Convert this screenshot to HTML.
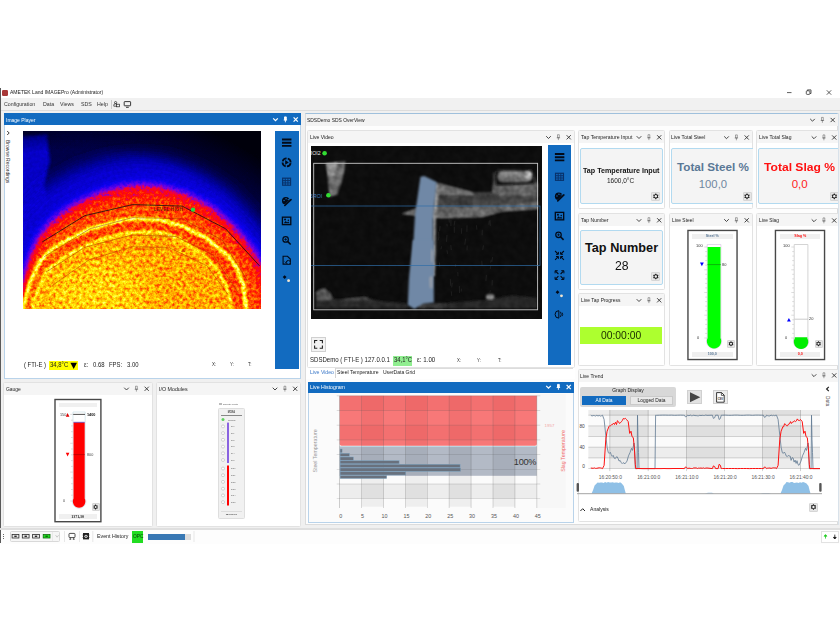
<!DOCTYPE html>
<html><head><meta charset="utf-8"><title>AMETEK Land IMAGEPro</title>
<style>
*{box-sizing:border-box;margin:0;padding:0}
html,body{width:840px;height:630px;overflow:hidden;background:#fff}
body{position:relative;font-family:"Liberation Sans",sans-serif;font-size:6px;color:#111;line-height:1}
.a{position:absolute}
.t{position:absolute;white-space:nowrap;line-height:1;transform:scaleX(.94);transform-origin:0 50%}
.tc{transform-origin:50% 50%}
.pt{position:absolute;background:#f4f4f4}
.blue{background:#126bc0}
svg{position:absolute;overflow:visible}
</style></head><body>

<div class="a" style="left:0px;top:87px;width:840px;height:457px;background:#f0f0f0"></div>
<div class="a" style="left:0px;top:87px;width:840px;height:11px;background:#fff"></div>
<div class="a" style="left:0px;top:88px;width:1.2px;height:455px;background:#5a5a5a"></div>
<div class="a" style="left:2px;top:90px;width:5.8px;height:5.8px;background:#a83838;border-radius:1.2px"></div>
<div class="t" style="left:10.4px;top:90px;font-size:5.6px;color:#222;transform:scaleX(.9)">AMETEK Land IMAGEPro (Administrator)</div>
<div class="a" style="left:0px;top:98px;width:840px;height:12.5px;background:#f1f1f1;border-bottom:1px solid #dcdcdc"></div>
<div class="t" style="left:3.9px;top:102px;font-size:5.6px;color:#333">Configuration</div>
<div class="t" style="left:42.6px;top:102px;font-size:5.6px;color:#333">Data</div>
<div class="t" style="left:60.2px;top:102px;font-size:5.6px;color:#333">Views</div>
<div class="t" style="left:80.7px;top:102px;font-size:5.6px;color:#333">SDS</div>
<div class="t" style="left:96.7px;top:102px;font-size:5.6px;color:#333">Help</div>
<div class="a" style="left:111.3px;top:99.5px;width:0.7px;height:9.5px;background:#ccc"></div>
<svg class="a" style="left:0;top:0" width="840" height="630"><g fill="none" stroke="#222" stroke-width="0.7"><circle cx="115.6" cy="102.6" r="1.1"/><path d="M113.8 106.2v-1a1.8 1.6 0 0 1 3.6 0v1z"/><rect x="116.4" y="104.2" width="3" height="2.6" fill="#f1f1f1"/><rect x="124.2" y="101.6" width="6.4" height="4.2" rx="0.5" stroke-width="0.9"/><path d="M126 107.3h2.8" stroke-width="0.9"/></g></svg>
<svg class="a" style="left:780px;top:86px" width="60" height="12" viewBox="0 0 60 12"><g stroke="#333" stroke-width="0.8" fill="none"><path d="M7 6.6h4.5"/><rect x="26.3" y="4.8" width="3.6" height="3.6" rx="0.8"/><path d="M27.4 4.8v-0.9h3.6v3.6h-1"/><path d="M46.8 4.3l4.4 4.4M51.2 4.3l-4.4 4.4"/></g></svg>
<div class="a" style="left:3.5px;top:113px;width:297.5px;height:265.5px;background:#fff;border:1px solid #b9d3ea"></div>
<div class="a" style="left:3.5px;top:113px;width:297.5px;height:12px;background:#126bc0"></div>
<div class="t" style="left:6.1px;top:117.5px;font-size:5.7px;transform:scaleX(0.876);color:#fff">Image Player</div>
<svg class="a" style="left:0;top:0" width="840" height="630"><g stroke="#fff" stroke-width="1.25" fill="none"><path d="M273.2 118.4l2.3 2.3l2.3 -2.3"/><path d="M293.59999999999997 117.4l4.2 4.2M297.8 117.4l-4.2 4.2"/><path d="M284.5 116.9h1.8v3h-1.8zM283.7 120.0h3.4M285.4 120.0v2.3" stroke-width="0.9" opacity="1" fill="#fff"/></g></svg>
<svg class="a" style="left:5px;top:129px" width="8" height="8"><path d="M2.2 2l2 2l-2 2" stroke="#222" stroke-width="0.9" fill="none"/></svg>
<div class="t" style="left:4.5px;top:140px;font-size:5px;color:#333;writing-mode:vertical-rl;transform:none">Browse Recordings</div>
<svg class="a" style="left:23px;top:131px;overflow:hidden" width="237.5" height="178" viewBox="0 0 237.5 178"><defs>
<filter id="b12" x="-30%" y="-30%" width="160%" height="160%"><feGaussianBlur stdDeviation="13"/></filter>
<filter id="b9" x="-30%" y="-30%" width="160%" height="160%"><feGaussianBlur stdDeviation="8"/></filter>
<filter id="b5" x="-30%" y="-30%" width="160%" height="160%"><feGaussianBlur stdDeviation="5"/></filter>
<filter id="b2" x="-30%" y="-30%" width="160%" height="160%"><feGaussianBlur stdDeviation="1.6"/></filter>
<filter id="b1" x="-30%" y="-30%" width="160%" height="160%"><feGaussianBlur stdDeviation="0.8"/></filter>
<filter id="iron" x="0" y="0" width="100%" height="100%" color-interpolation-filters="sRGB">
 <feTurbulence type="fractalNoise" baseFrequency="0.3" numOctaves="3" seed="7" result="n"/>
 <feColorMatrix in="n" type="matrix" values="1.6 0 0 0 -0.3  1.6 0 0 0 -0.3  1.6 0 0 0 -0.3  0 0 0 0 1" result="ng"/>
 <feComposite in="SourceGraphic" in2="ng" operator="arithmetic" k1="0.46" k2="0.77" k3="0" k4="0" result="f"/>
 <feComponentTransfer in="f">
  <feFuncR type="table" tableValues="0 0 0 0.05 0.45 0.95 1 1 1 1 1 1 1"/>
  <feFuncG type="table" tableValues="0 0 0 0 0 0 0.05 0.3 0.55 0.78 0.95 1 1"/>
  <feFuncB type="table" tableValues="0.02 0.3 0.62 0.95 0.9 0.25 0 0 0 0 0.05 0.3 0.6"/>
  <feFuncA type="linear" slope="0" intercept="1"/>
 </feComponentTransfer>
</filter>
<filter id="ironlo" x="0" y="0" width="100%" height="100%" color-interpolation-filters="sRGB">
 <feTurbulence type="fractalNoise" baseFrequency="0.3" numOctaves="2" seed="2" result="n"/>
 <feColorMatrix in="n" type="matrix" values="1.6 0 0 0 -0.3  1.6 0 0 0 -0.3  1.6 0 0 0 -0.3  0 0 0 0 1" result="ng"/>
 <feComposite in="SourceGraphic" in2="ng" operator="arithmetic" k1="0.12" k2="0.94" k3="0" k4="0" result="f"/>
 <feComponentTransfer in="f">
  <feFuncR type="table" tableValues="0 0 0 0.05 0.45 0.95 1 1 1 1 1 1 1"/>
  <feFuncG type="table" tableValues="0 0 0 0 0 0 0.05 0.3 0.55 0.78 0.95 1 1"/>
  <feFuncB type="table" tableValues="0.02 0.3 0.62 0.95 0.9 0.25 0 0 0 0 0.05 0.3 0.6"/>
  <feFuncA type="linear" slope="0" intercept="1"/>
 </feComponentTransfer>
</filter>
<linearGradient id="tbg" x1="0" y1="0" x2="0" y2="1"><stop offset="0" stop-color="#121212"/><stop offset="0.4" stop-color="#181818"/><stop offset="1" stop-color="#202020"/></linearGradient>
<radialGradient id="tcorner" cx="0.22" cy="1.0" r="1.12"><stop offset="0.78" stop-color="#000" stop-opacity="0"/><stop offset="1" stop-color="#000" stop-opacity="0.9"/></radialGradient>
</defs><defs><g id="tfield"><rect x="-5" y="-5" width="247.5" height="188" fill="url(#tbg)"/><path d="M-3 6 L24 3 L27 30 L21 55 L27 75 L40 100 L-3 125Z" fill="#343434" filter="url(#b2)"/><path d="M-20.4 192.1 L-20.4 105.5 L-1.8 77.6 L23.0 54.4 L53.9 37.3 L84.9 27.4 L115.8 24.3 L146.8 27.4 L177.8 38.9 L208.7 59.0 L233.5 86.9 L255.2 117.8 L255.2 192.1Z" fill="#383838" filter="url(#b9)"/><path d="M-1.2 192.1 L-0.3 168.9 L4.4 143.8 L9.6 123.4 L17.4 106.1 L29.8 90.9 L47.7 77.0 L69.4 66.1 L94.2 58.1 L115.8 55.0 L138.1 56.8 L163.2 64.3 L188.3 77.6 L210.3 96.5 L229.2 119.4 L241.5 141.4 L245.3 192.1Z" fill="#4c4c4c" filter="url(#b9)"/><rect x="-5" y="-5" width="247.5" height="188" fill="url(#tcorner)"/><path d="M-1.2 192.1 L-0.3 168.9 L4.4 143.8 L9.6 123.4 L17.4 106.1 L29.8 90.9 L47.7 77.0 L69.4 66.1 L94.2 58.1 L115.8 55.0 L138.1 56.8 L163.2 64.3 L188.3 77.6 L210.3 96.5 L229.2 119.4 L241.5 141.4 L245.3 192.1Z" fill="#828282" filter="url(#b5)"/><path d="M-2.4 192.1 L1.3 163.7 L9.0 134.9 L19.9 114.1 L35.3 98.6 L53.9 86.0 L75.6 77.0 L94.2 72.9 L115.8 70.8 L137.5 72.6 L162.3 79.4 L187.0 91.8 L208.7 109.5 L225.7 133.3 L236.6 158.1 L238.1 192.1Z" fill="#969696" filter="url(#b5)"/><path d="M-3.7 192.1 L0.7 173.9 L7.5 150.3 L16.8 130.5 L29.2 118.8 L41.5 110.1 L66.3 98.3 L94.2 90.3 L107.2 87.8 L115.8 87.5 L137.5 89.0 L159.2 94.9 L184.0 107.9 L205.6 125.6 L213.7 136.7 L220.5 155.0 L222.7 175.7 L223.6 192.1Z" fill="#949494" filter="url(#b1)"/><path d="M-3.7 192.1 L0.7 173.9 L7.5 150.3 L16.8 130.5 L29.2 118.8 L41.5 110.1 L66.3 98.3 L94.2 90.3 L107.2 87.8 L115.8 87.5 L137.5 89.0 L159.2 94.9 L184.0 107.9 L205.6 125.6 L213.7 136.7 L220.5 155.0 L222.7 175.7 L223.6 192.1" fill="none" stroke="#ffffff" stroke-width="3.2" filter="url(#b1)"/><path d="M6.9 192.1 L11.2 167.4 L23.6 140.1 L41.5 125.6 L64.4 113.5 L84.9 106.1 L107.2 101.7 L129.5 100.8 L140.6 102.0 L157.6 107.9 L177.8 121.6 L193.2 136.4 L203.1 155.0 L207.5 170.5 L209.3 192.1Z" fill="#b4b4b4" filter="url(#b2)"/><ellipse cx="72" cy="165" rx="52" ry="34" fill="#c6c6c6" filter="url(#b12)"/><path d="M6.9 192.1 L11.2 167.4 L23.6 140.1 L41.5 125.6 L64.4 113.5 L84.9 106.1 L107.2 101.7 L129.5 100.8 L140.6 102.0 L157.6 107.9 L177.8 121.6 L193.2 136.4 L203.1 155.0 L207.5 170.5 L209.3 192.1" fill="none" stroke="#ececec" stroke-width="2.4" filter="url(#b1)"/></g><mask id="tmask" maskUnits="userSpaceOnUse" x="-5" y="-5" width="247.5" height="188"><path d="M-1.2 192.1 L-0.3 168.9 L4.4 143.8 L9.6 123.4 L17.4 106.1 L29.8 90.9 L47.7 77.0 L69.4 66.1 L94.2 58.1 L115.8 55.0 L138.1 56.8 L163.2 64.3 L188.3 77.6 L210.3 96.5 L229.2 119.4 L241.5 141.4 L245.3 192.1Z" fill="#fff" filter="url(#b5)" transform="translate(0 -3)"/></mask></defs><g filter="url(#ironlo)"><use href="#tfield"/></g><g mask="url(#tmask)"><g filter="url(#iron)"><use href="#tfield"/></g></g><path d="M19.2 111.0 L61.7 84.7 L109.6 73.6 L159.2 75.1 L202.5 97.7 L236.6 134.9" fill="none" stroke="#111" stroke-width="0.8"/><path d="M21.4 125.6 L67.2 97.7 L109.6 86.6 L159.2 87.8 L199.4 109.2 L224.8 150.3" fill="none" stroke="#a83000" stroke-width="0.6" opacity="0.85"/><path d="M23.0 141.1 L61.7 116.3 L109.6 103.9 L153.0 105.5 L190.1 124.0 L214.9 161.2" fill="none" stroke="#b02800" stroke-width="0.6" opacity="0.9"/><path d="M28.5 155.0 L66.3 128.7 L109.6 115.7 L146.8 116.9 L184.0 134.9 L205.6 164.3" fill="none" stroke="#c03800" stroke-width="0.6" opacity="0.9"/><text x="131" y="80.3" font-size="5" font-family="Liberation Sans,sans-serif" fill="#401000" opacity="0.85">LEVEL HIGH</text><text x="122" y="107" font-size="5" font-family="Liberation Sans,sans-serif" fill="#d09000" opacity="0.8">LEVEL LOW</text><text x="114" y="119" font-size="5" font-family="Liberation Sans,sans-serif" fill="#e07000" opacity="0.7">LEVEL LOW</text><circle cx="170" cy="78.6" r="2.2" fill="#22dd44"/><path d="M158 121l2.2 -3.6l2.2 3.6z" fill="#d03000" opacity="0.8"/></svg>
<div class="a" style="left:275px;top:131px;width:23.5px;height:237.5px;background:#126bc0"></div>
<svg class="a" style="left:0;top:0" width="840" height="630"><g transform="translate(286.6 142.70000000000002) scale(1.1) translate(-286.6 -142.3)"><path d="M282.40000000000003 139.4h8.6M282.40000000000003 142.3h8.6M282.40000000000003 145.20000000000002h8.6" stroke="#020a18" stroke-width="1.75"/></g><g transform="translate(286.6 162.4) scale(1.1) translate(-286.6 -162)"><circle cx="286.6" cy="162" r="3.7" fill="none" stroke="#020a18" stroke-width="1.6" stroke-dasharray="4.7 1.11" transform="rotate(10 286.6 162)"/><path d="M285.3 159.9l3.3 2.1l-3.3 2.1z" fill="#020a18"/></g><g transform="translate(286.6 181.70000000000002) scale(1.1) translate(-286.6 -181.3)"><rect x="283.0" y="178.10000000000002" width="7.2" height="6.4" fill="none" stroke="#08336c" stroke-width="1.1"/><path d="M285.40000000000003 178.10000000000002v6.4M287.8 178.10000000000002v6.4M283.0 180.3h7.2M283.0 182.4h7.2" stroke="#08336c" stroke-width="0.9"/></g><g transform="translate(286.6 201.20000000000002) scale(1.1) translate(-286.6 -200.8)"><circle cx="285.90000000000003" cy="200.5" r="3.5" fill="#020a18"/><path d="M283.40000000000003 205.4L291.20000000000005 197.4L292.0 201.20000000000002L287.6 205.8z" fill="#126bc0"/><path d="M285.0 204.70000000000002L290.6 199.3" stroke="#020a18" stroke-width="1.5" stroke-linecap="round"/><circle cx="284.3" cy="200.20000000000002" r="0.65" fill="#126bc0"/><circle cx="286.1" cy="198.60000000000002" r="0.65" fill="#126bc0"/><circle cx="288.1" cy="199.20000000000002" r="0.6" fill="#126bc0"/></g><g transform="translate(286.6 220.9) scale(1.1) translate(-286.6 -220.5)"><rect x="282.8" y="217.1" width="7.6" height="6.8" fill="none" stroke="#020a18" stroke-width="1.2"/><path d="M284.0 222.7l1.8 -2l1.2 1.2l1 -0.8l1.4 1.6z" fill="#020a18"/><circle cx="285.20000000000005" cy="219.2" r="0.9" fill="#020a18"/><circle cx="288.20000000000005" cy="219.9" r="0.7" fill="#020a18"/></g><g transform="translate(286.6 240.4) scale(1.1) translate(-286.6 -240)"><circle cx="285.70000000000005" cy="239.1" r="2.5" fill="none" stroke="#020a18" stroke-width="1.1"/><path d="M287.5 240.9l2.8 2.8" stroke="#020a18" stroke-width="1.4"/><path d="M284.5 239.1h2.4M285.70000000000005 237.9v2.4" stroke="#020a18" stroke-width="0.7"/></g><g transform="translate(286.6 260.2) scale(1.1) translate(-286.6 -259.8)"><path d="M283.40000000000003 256.2h4l2.6 2.6v4.6h-6.6z" fill="none" stroke="#020a18" stroke-width="1"/><circle cx="288.20000000000005" cy="261.8" r="1.8" fill="#126bc0" stroke="#020a18" stroke-width="0.8"/><path d="M284.8 261.0l1 1l1.6 -1.8" stroke="#020a18" stroke-width="0.7" fill="none"/></g><g transform="translate(286.6 278.9) scale(1.1) translate(-286.6 -278.5)"><path d="M284.8 275.1l1.7 1.7l-1.7 1.7l-1.7 -1.7z" fill="#020a18"/><circle cx="288.40000000000003" cy="280.1" r="1.3" fill="#f2e6d0"/></g></svg>
<div class="t" style="left:23.8px;top:362px;font-size:6.3px;color:#222">( FTI-E )</div>
<div class="a" style="left:48.5px;top:361px;width:29.8px;height:9px;background:#ffff00"></div>
<div class="t" style="left:49.5px;top:362px;font-size:6.3px;color:#222">34,8°C</div>
<svg class="a" style="left:69.5px;top:361.5px" width="8" height="8"><path d="M0.4 0.8h6.6l-3.3 6.2z" fill="#000"/></svg>
<div class="t" style="left:83.5px;top:362px;font-size:6.3px;color:#222">ε:</div>
<div class="t" style="left:93px;top:362px;font-size:6.3px;color:#222">0.68</div>
<div class="t" style="left:109.3px;top:362px;font-size:6.3px;color:#222">FPS:</div>
<div class="t" style="left:126.5px;top:362px;font-size:6.3px;color:#222">3.00</div>
<div class="t" style="left:212px;top:363px;font-size:4.8px;color:#333">X:</div>
<div class="t" style="left:230px;top:363px;font-size:4.8px;color:#333">Y:</div>
<div class="t" style="left:247.5px;top:363px;font-size:4.8px;color:#333">T:</div>
<div class="a" style="left:305.3px;top:113px;width:533.2px;height:411.5px;background:#fdfdfd;border:1px solid #dcdcdc;border-top:1px solid #9fc0dc"></div>
<div class="a" style="left:306px;top:114px;width:531.5px;height:12px;background:#f3f3f3"></div>
<div class="t" style="left:307.3px;top:117.6px;font-size:5.7px;transform:scaleX(0.869);color:#222">SDSDemo SDS OverView</div>
<svg class="a" style="left:0;top:0" width="840" height="630"><g stroke="#333" stroke-width="0.9" fill="none"><path d="M810.2 118.9l2.3 2.3l2.3 -2.3"/><path d="M830.6 117.9l4.2 4.2M834.8000000000001 117.9l-4.2 4.2"/><path d="M821.5 117.4h1.8v3h-1.8zM820.6999999999999 120.5h3.4M822.4 120.5v2.3" stroke-width="0.55" opacity="0.75" fill="none"/></g></svg>
<div class="a" style="left:306px;top:367px;width:268.5px;height:11.5px;background:#fff"></div>
<div class="a" style="left:306.5px;top:130px;width:268px;height:237.5px;background:#fff;border:1px solid #e2e2e2;border-radius:1.5px"></div>
<div class="a" style="left:307.5px;top:131px;width:266px;height:12px;background:#f5f5f5"></div>
<div class="t" style="left:309.7px;top:135.1px;font-size:5.7px;transform:scaleX(0.896);color:#222">Live Video</div>
<svg class="a" style="left:0;top:0" width="840" height="630"><g stroke="#333" stroke-width="0.9" fill="none"><path d="M546.2 136.20000000000002l2.3 2.3l2.3 -2.3"/><path d="M566.6 135.20000000000002l4.2 4.2M570.8000000000001 135.20000000000002l-4.2 4.2"/><path d="M557.5 134.70000000000002h1.8v3h-1.8zM556.6999999999999 137.8h3.4M558.4 137.8v2.3" stroke-width="0.55" opacity="0.75" fill="none"/></g></svg>
<svg class="a" style="left:311px;top:146px;overflow:hidden" width="231" height="173" viewBox="0 0 231 173"><defs>
<filter id="v1" x="-20%" y="-20%" width="140%" height="140%"><feGaussianBlur stdDeviation="0.9"/></filter>
<filter id="v3" x="-40%" y="-40%" width="180%" height="180%"><feGaussianBlur stdDeviation="9"/></filter>
<filter id="vn" filterUnits="userSpaceOnUse" x="0" y="0" width="231" height="173" color-interpolation-filters="sRGB">
 <feTurbulence type="fractalNoise" baseFrequency="0.13" numOctaves="2" seed="3" result="n"/>
 <feColorMatrix in="n" type="matrix" values="1.5 0 0 0 -0.25  1.5 0 0 0 -0.25  1.5 0 0 0 -0.25  0 0 0 0 1" result="ng"/>
 <feComposite in="SourceGraphic" in2="ng" operator="arithmetic" k1="0.5" k2="0.75" k3="0" k4="0"/>
</filter>
</defs><g filter="url(#vn)"><rect x="-5" y="-5" width="241" height="183" fill="#0d0d0d"/><path d="M14.9 17.2 L34.3 15.3 L33.0 26.2 L30.1 37.5 L26.2 48.8 L18.5 50.7 L16.6 30.1Z" fill="#6e6e6e" filter="url(#v1)"/><path d="M15.9 17.8 L26.2 16.6 L24.6 29.4 L17.2 30.1Z" fill="#8a8a8a" filter="url(#v1)"/><path d="M90.7 68.0 L104.4 62.7 L126.1 36.5 L161.5 46.3 L181.2 46.3 L182.2 27.6 L187.1 23.7 L220.6 23.7 L226.5 37.5 L226.5 63.1 L191.0 65.4 L171.4 70.9 L128.1 72.1 L108.4 70.1Z" fill="#444" filter="url(#v1)"/><path d="M125.1 37.1 L161.5 46.3 L163.5 50.3 L124.1 49.7Z" fill="#6c6c6c" filter="url(#v1)"/><path d="M182.2 38.4 L226.5 36.5 L226.5 50.3 L187.1 49.3 L181.6 46.9Z" fill="#5e5e5e" filter="url(#v1)"/><path d="M90.7 68.0 L104.4 63.1 L124.1 61.1 L187.1 60.1 L226.5 55.6 L226.5 63.1 L191.0 65.4 L171.4 70.9 L128.1 72.1 L108.4 70.1Z" fill="#676767" filter="url(#v1)"/><path d="M184.2 24.7 L221.6 23.3 L223.5 37.5 L185.1 39.4Z" fill="#0c0c0c" filter="url(#v1)"/><rect x="186.7" y="24.9" width="34.4" height="11.4" rx="5" fill="#7a7a7a" filter="url(#v1)"/><circle cx="216.6" cy="29.0" r="4" fill="#a4a4a4" filter="url(#v1)"/><path d="M128.1 48.9 L161.5 49.7 L187.1 48.5 L187.1 58.7 L128.1 59.9Z" fill="#3e3e3e" filter="url(#v1)"/><path d="M124.1 36.5 L128.1 39.4 L125.1 69.0 L124.1 130.0 L120.6 130.0 L121.8 69.0Z" fill="#8e8e8e" filter="url(#v1)"/><path d="M4.8 146.2 L8.8 143.2 L13.7 142.2 L19.6 147.1 L22.5 153.1 L33.4 153.1 L53.1 150.7 L68.8 155.0 L96.4 157.4 L96.4 161.9 L4.8 161.9Z" fill="#2c2c2c" filter="url(#v1)"/><path d="M5.4 146.8 L8.8 143.6 L13.7 142.6 L19.2 147.5 L21.6 153.1 L11.7 155.4 L5.8 154.0Z" fill="#5a5a5a" filter="url(#v1)"/><path d="M29.4 154.0 L37.3 152.7 L53.1 151.1 L59.0 153.1 L43.2 155.4Z" fill="#484848" filter="url(#v1)"/><path d="M122.9 158.9 L145.4 156.0 L174.4 154.1 L200.2 149.3 L226.0 151.9 L226.0 162.2 L122.9 162.2Z" fill="#262626" filter="url(#v1)"/><ellipse cx="179.2" cy="150.9" rx="4.4" ry="2.8" fill="#8c8c8c" filter="url(#v1)"/><path d="M107.4 156.7 L135.8 157.3 L135.8 161.5 L107.4 162.2Z" fill="#3a3a3a" filter="url(#v1)"/></g><g stroke="#777" stroke-width="0.4" opacity="0.4"><path d="M139.9 80.0l-0.0 -6.2"/><path d="M129.9 103.3l0.7 -3.0"/><path d="M171.1 89.3l0.2 -5.6"/><path d="M136.2 80.3l-0.3 -2.4"/><path d="M174.9 134.9l0.5 -6.0"/><path d="M144.3 120.9l0.4 -2.7"/><path d="M177.9 78.8l0.2 -3.6"/><path d="M155.9 85.9l0.1 -6.6"/><path d="M181.1 139.5l0.2 -5.5"/><path d="M179.6 116.6l0.6 -2.8"/><path d="M156.0 104.3l0.2 -4.8"/><path d="M135.5 95.8l0.5 -6.8"/><path d="M128.7 120.9l-0.2 -4.3"/><path d="M153.8 98.7l0.8 -6.0"/><path d="M150.4 87.8l0.3 -5.6"/><path d="M147.0 130.3l-0.2 -4.2"/><path d="M179.4 79.9l-0.5 -5.9"/><path d="M171.1 120.0l-0.3 -5.3"/><path d="M136.5 107.8l-0.5 -3.5"/><path d="M178.9 146.5l0.4 -2.2"/><path d="M127.1 94.5l0.8 -3.1"/><path d="M150.2 145.6l0.3 -2.9"/><path d="M143.3 86.9l0.0 -6.3"/><path d="M148.5 147.0l-0.1 -7.0"/><path d="M128.6 85.2l0.5 -5.2"/><path d="M143.1 79.6l0.8 -4.9"/><path d="M138.3 76.6l-0.5 -6.2"/><path d="M165.9 83.7l-0.5 -4.5"/><path d="M140.7 149.8l-0.4 -4.4"/><path d="M171.7 103.9l0.8 -4.6"/><path d="M140.3 104.0l-0.5 -4.9"/><path d="M140.7 141.4l0.6 -4.5"/><path d="M127.9 91.8l-0.3 -6.0"/><path d="M139.7 139.8l-0.4 -6.7"/><path d="M180.8 116.1l0.8 -5.0"/><path d="M179.2 123.0l0.5 -3.3"/></g><path d="M109.4 30.8 L113.3 30.0 L125.7 35.9 L122.1 69.0 L121.8 130.0 L100.5 130.0 L104.0 69.0Z" fill="#7088a6" filter="url(#v1)"/><path d="M101.9 94.0 L122.3 94.0 L122.9 156.6 L112.1 157.8 L103.4 162.9 L96.8 159.0 L97.9 133.4Z" fill="#7088a6" filter="url(#v1)"/><path d="M120.0 101.9 L122.3 105.8 L121.6 117.6 L120.0 115.7Z" fill="#9a9fa8" filter="url(#v1)"/><path d="M118.4 131.4 L121.6 129.4 L121.2 143.2 L118.8 141.2Z" fill="#9a9fa8" filter="url(#v1)"/><rect x="2.7" y="17.3" width="223.9" height="146.5" fill="none" stroke="#c8c8c8" stroke-width="0.9"/><rect x="-0.5" y="60" width="229.5" height="59.6" fill="none" stroke="#2f6da8" stroke-width="0.7"/><text x="-2.5" y="9" font-size="5.2" font-family="Liberation Sans,sans-serif" fill="#e8e8e8">ROI2</text><circle cx="13.6" cy="7.2" r="2.3" fill="#33dd33"/><text x="-1" y="51.5" font-size="5.2" font-family="Liberation Sans,sans-serif" fill="#3f7fc0">5ROI</text><circle cx="17.4" cy="49.2" r="2.3" fill="#33dd33"/></svg>
<div class="a" style="left:547.5px;top:145px;width:23.8px;height:219.8px;background:#126bc0"></div>
<svg class="a" style="left:0;top:0" width="840" height="630"><g transform="translate(559.5 157.20000000000002) scale(1.1) translate(-559.5 -156.8)"><path d="M555.3 153.9h8.6M555.3 156.8h8.6M555.3 159.70000000000002h8.6" stroke="#020a18" stroke-width="1.75"/></g><g transform="translate(559.5 176.8) scale(1.1) translate(-559.5 -176.4)"><rect x="555.9" y="173.20000000000002" width="7.2" height="6.4" fill="none" stroke="#08336c" stroke-width="1.1"/><path d="M558.3 173.20000000000002v6.4M560.7 173.20000000000002v6.4M555.9 175.4h7.2M555.9 177.5h7.2" stroke="#08336c" stroke-width="0.9"/></g><g transform="translate(559.5 196.6) scale(1.1) translate(-559.5 -196.2)"><circle cx="558.8" cy="195.89999999999998" r="3.5" fill="#020a18"/><path d="M556.3 200.79999999999998L564.1 192.79999999999998L564.9 196.6L560.5 201.2z" fill="#126bc0"/><path d="M557.9 200.1L563.5 194.7" stroke="#020a18" stroke-width="1.5" stroke-linecap="round"/><circle cx="557.2" cy="195.6" r="0.65" fill="#126bc0"/><circle cx="559.0" cy="194.0" r="0.65" fill="#126bc0"/><circle cx="561.0" cy="194.6" r="0.6" fill="#126bc0"/></g><g transform="translate(559.5 216.1) scale(1.1) translate(-559.5 -215.7)"><rect x="555.7" y="212.29999999999998" width="7.6" height="6.8" fill="none" stroke="#020a18" stroke-width="1.2"/><path d="M556.9 217.89999999999998l1.8 -2l1.2 1.2l1 -0.8l1.4 1.6z" fill="#020a18"/><circle cx="558.1" cy="214.39999999999998" r="0.9" fill="#020a18"/><circle cx="561.1" cy="215.1" r="0.7" fill="#020a18"/></g><g transform="translate(559.5 235.8) scale(1.1) translate(-559.5 -235.4)"><circle cx="558.6" cy="234.5" r="2.5" fill="none" stroke="#020a18" stroke-width="1.1"/><path d="M560.4 236.3l2.8 2.8" stroke="#020a18" stroke-width="1.4"/><path d="M557.4 234.5h2.4M558.6 233.3v2.4" stroke="#020a18" stroke-width="0.7"/></g><g transform="translate(559.5 255.4) scale(1.1) translate(-559.5 -255)"><path d="M555.5 251l2.8 2.8M563.5 251l-2.8 2.8M555.5 259l2.8 -2.8M563.5 259l-2.8 -2.8" stroke="#020a18" stroke-width="1"/><path d="M558.5 251.8v2.2h-2.2M560.5 251.8v2.2h2.2M558.5 258.2v-2.2h-2.2M560.5 258.2v-2.2h2.2" stroke="#020a18" stroke-width="0.9" fill="none"/></g><g transform="translate(559.5 275.09999999999997) scale(1.1) translate(-559.5 -274.7)"><path d="M555.9 271.09999999999997l2.6 2.6M563.1 271.09999999999997l-2.6 2.6M555.9 278.3l2.6 -2.6M563.1 278.3l-2.6 -2.6" stroke="#020a18" stroke-width="1"/><path d="M555.5 273.09999999999997v-2.4h2.4M563.5 273.09999999999997v-2.4h-2.4M555.5 276.3v2.4h2.4M563.5 276.3v2.4h-2.4" stroke="#020a18" stroke-width="0.9" fill="none"/></g><g transform="translate(559.5 294.09999999999997) scale(1.1) translate(-559.5 -293.7)"><path d="M557.7 290.3l1.7 1.7l-1.7 1.7l-1.7 -1.7z" fill="#020a18"/><circle cx="561.3" cy="295.3" r="1.3" fill="#f2e6d0"/></g><g transform="translate(559.5 314.4) scale(1.1) translate(-559.5 -314)"><path d="M558.9 310.6a3.4 3.4 0 1 0 0 6.8z" fill="none" stroke="#020a18" stroke-width="0.9"/><path d="M560.3 311.6q1.6 2.4 0 4.8M561.9 312.4q1 1.6 0 3.2" stroke="#020a18" stroke-width="0.8" fill="none"/></g></svg>
<div class="a" style="left:310.7px;top:337px;width:15.3px;height:14.8px;background:#f3f3f3;border:1px solid #d0d0d0"></div>
<svg class="a" style="left:310.8px;top:337px" width="15" height="15"><path d="M3.6 6.2v-2.7h2.7M8.7 3.5h2.7v2.7M11.4 8.6v2.7h-2.7M6.3 11.3h-2.7v-2.7" stroke="#222" stroke-width="1.1" fill="none"/></svg>
<div class="t" style="left:310px;top:357px;font-size:6.9px;transform:scaleX(0.880);color:#222">SDSDemo ( FTI-E ) 127.0.0.1</div>
<div class="a" style="left:392.9px;top:356.4px;width:19.3px;height:9.2px;background:#90ee90"></div>
<div class="t" style="left:393.6px;top:357px;font-size:6.9px;transform:scaleX(0.850);color:#222">34,1°C</div>
<div class="t" style="left:416.7px;top:357px;font-size:6.9px;transform:scaleX(0.900);color:#222">ε: 1.00</div>
<div class="t" style="left:456.5px;top:359px;font-size:4.6px;color:#333">X:</div>
<div class="t" style="left:477px;top:359px;font-size:4.6px;color:#333">Y:</div>
<div class="t" style="left:497.5px;top:359px;font-size:4.6px;color:#333">T:</div>
<div class="a" style="left:335.4px;top:367.6px;width:238px;height:0.8px;background:#dcdcdc"></div>
<div class="t" style="left:309.7px;top:370px;font-size:5.6px;transform:scaleX(0.921);color:#3b78c8">Live Video</div>
<div class="a" style="left:335.2px;top:367.6px;width:0.8px;height:10px;background:#d4d4d4"></div>
<div class="t" style="left:337.4px;top:370px;font-size:5.6px;transform:scaleX(0.909);color:#222">Steel Temperature</div>
<div class="t" style="left:382.9px;top:370px;font-size:5.6px;transform:scaleX(0.897);color:#222">UserData Grid</div>
<div class="a" style="left:307.5px;top:381.5px;width:266.2px;height:141px;background:#fbfbfb;border:1px solid #b9d3ea"></div>
<div class="a" style="left:307.5px;top:381.5px;width:266.2px;height:11.7px;background:#126bc0"></div>
<div class="t" style="left:310px;top:385px;font-size:5.6px;transform:scaleX(0.937);color:#fff">Live Histogram</div>
<svg class="a" style="left:0;top:0" width="840" height="630"><g stroke="#fff" stroke-width="1.25" fill="none"><path d="M546.2 385.9l2.3 2.3l2.3 -2.3"/><path d="M566.6 384.9l4.2 4.2M570.8000000000001 384.9l-4.2 4.2"/><path d="M557.5 384.4h1.8v3h-1.8zM556.6999999999999 387.5h3.4M558.4 387.5v2.3" stroke-width="0.9" opacity="1" fill="#fff"/></g></svg>
<svg class="a" style="left:0;top:0" width="840" height="630"><rect x="536.8" y="394" width="29" height="114" fill="#f7f7f7"/><rect x="339.7" y="395.8" width="197.1" height="14.7" fill="#000" opacity="0.055"/><rect x="339.7" y="425.2" width="197.1" height="14.7" fill="#000" opacity="0.055"/><rect x="339.7" y="454.6" width="197.1" height="14.7" fill="#000" opacity="0.055"/><rect x="339.7" y="484.0" width="197.1" height="14.7" fill="#000" opacity="0.055"/><rect x="361.6" y="395.8" width="21.9" height="110.9" fill="#000" opacity="0.05"/><rect x="405.4" y="395.8" width="21.9" height="110.9" fill="#000" opacity="0.05"/><rect x="449.2" y="395.8" width="21.9" height="110.9" fill="#000" opacity="0.05"/><rect x="493.0" y="395.8" width="21.9" height="110.9" fill="#000" opacity="0.05"/><path d="M339.7 395.8H536.8V444a1.8 1.8 0 0 1 -1.8 1.8H341.5a1.8 1.8 0 0 1 -1.8 -1.8z" fill="#f87878"/><rect x="339.7" y="395.8" width="197.1" height="14.7" fill="#d04040" opacity="0.13"/><rect x="339.7" y="425.2" width="197.1" height="14.7" fill="#d04040" opacity="0.13"/><rect x="361.6" y="395.8" width="21.9" height="50.0" fill="#c03030" opacity="0.1"/><rect x="405.4" y="395.8" width="21.9" height="50.0" fill="#c03030" opacity="0.1"/><rect x="449.2" y="395.8" width="21.9" height="50.0" fill="#c03030" opacity="0.1"/><rect x="493.0" y="395.8" width="21.9" height="50.0" fill="#c03030" opacity="0.1"/><rect x="339.7" y="446.6" width="197.1" height="29.2" fill="#b3bac6"/><rect x="361.6" y="446.6" width="21.9" height="29.2" fill="#404858" opacity="0.1"/><rect x="405.4" y="446.6" width="21.9" height="29.2" fill="#404858" opacity="0.1"/><rect x="449.2" y="446.6" width="21.9" height="29.2" fill="#404858" opacity="0.1"/><rect x="493.0" y="446.6" width="21.9" height="29.2" fill="#404858" opacity="0.1"/><path d="M339.7 446.6H536.8" stroke="#a8d0e0" stroke-width="0.6"/><path d="M339.7 395.8V508" stroke="#555" stroke-width="0.5" opacity="0.7"/><path d="M361.6 395.8V508" stroke="#555" stroke-width="0.5" opacity="0.45"/><path d="M383.5 395.8V508" stroke="#555" stroke-width="0.5" opacity="0.45"/><path d="M405.4 395.8V508" stroke="#555" stroke-width="0.5" opacity="0.45"/><path d="M427.3 395.8V508" stroke="#555" stroke-width="0.5" opacity="0.45"/><path d="M449.2 395.8V508" stroke="#555" stroke-width="0.5" opacity="0.45"/><path d="M471.1 395.8V508" stroke="#555" stroke-width="0.5" opacity="0.45"/><path d="M493.0 395.8V508" stroke="#555" stroke-width="0.5" opacity="0.45"/><path d="M514.9 395.8V508" stroke="#555" stroke-width="0.5" opacity="0.45"/><path d="M536.8 395.8V508" stroke="#555" stroke-width="0.5" opacity="0.45"/><path d="M336.7 395.8H540.3" stroke="#555" stroke-width="0.5" opacity="0.38"/><path d="M336.7 410.5H540.3" stroke="#555" stroke-width="0.5" opacity="0.38"/><path d="M336.7 425.2H540.3" stroke="#555" stroke-width="0.5" opacity="0.38"/><path d="M336.7 439.9H540.3" stroke="#555" stroke-width="0.5" opacity="0.38"/><path d="M336.7 454.6H540.3" stroke="#555" stroke-width="0.5" opacity="0.38"/><path d="M336.7 469.3H540.3" stroke="#555" stroke-width="0.5" opacity="0.38"/><path d="M336.7 484.0H540.3" stroke="#555" stroke-width="0.5" opacity="0.38"/><path d="M336.7 498.7H540.3" stroke="#555" stroke-width="0.5" opacity="0.38"/><rect x="340.09999999999997" y="449" width="2.0" height="3.6" fill="#69717d" stroke="#79a4c4" stroke-width="0.45"/><rect x="340.09999999999997" y="453.3" width="9.3" height="3.0" fill="#69717d" stroke="#79a4c4" stroke-width="0.45"/><rect x="340.09999999999997" y="457" width="13.3" height="3.2" fill="#69717d" stroke="#79a4c4" stroke-width="0.45"/><rect x="340.09999999999997" y="460.7" width="59.0" height="3.1" fill="#69717d" stroke="#79a4c4" stroke-width="0.45"/><rect x="340.09999999999997" y="464.3" width="120.0" height="3.3" fill="#69717d" stroke="#79a4c4" stroke-width="0.45"/><rect x="340.09999999999997" y="468" width="120.5" height="3.3" fill="#69717d" stroke="#79a4c4" stroke-width="0.45"/><rect x="340.09999999999997" y="471.8" width="65.6" height="3.2" fill="#69717d" stroke="#79a4c4" stroke-width="0.45"/><rect x="340.09999999999997" y="475.5" width="46.6" height="3.0" fill="#69717d" stroke="#79a4c4" stroke-width="0.45"/><text x="340.7" y="517.8" font-size="5.4" text-anchor="middle" fill="#555" font-family="Liberation Sans,sans-serif">0</text><text x="362.6" y="517.8" font-size="5.4" text-anchor="middle" fill="#555" font-family="Liberation Sans,sans-serif">5</text><text x="384.5" y="517.8" font-size="5.4" text-anchor="middle" fill="#555" font-family="Liberation Sans,sans-serif">10</text><text x="406.4" y="517.8" font-size="5.4" text-anchor="middle" fill="#555" font-family="Liberation Sans,sans-serif">15</text><text x="428.3" y="517.8" font-size="5.4" text-anchor="middle" fill="#555" font-family="Liberation Sans,sans-serif">20</text><text x="450.2" y="517.8" font-size="5.4" text-anchor="middle" fill="#555" font-family="Liberation Sans,sans-serif">25</text><text x="472.1" y="517.8" font-size="5.4" text-anchor="middle" fill="#555" font-family="Liberation Sans,sans-serif">30</text><text x="494.0" y="517.8" font-size="5.4" text-anchor="middle" fill="#555" font-family="Liberation Sans,sans-serif">35</text><text x="515.9" y="517.8" font-size="5.4" text-anchor="middle" fill="#555" font-family="Liberation Sans,sans-serif">40</text><text x="537.8" y="517.8" font-size="5.4" text-anchor="middle" fill="#555" font-family="Liberation Sans,sans-serif">45</text><text x="525" y="465" font-size="9.2" text-anchor="middle" fill="#333" font-family="Liberation Sans,sans-serif" letter-spacing="-0.3">100%</text><text x="549.5" y="426.6" font-size="4.4" text-anchor="middle" fill="#f2a6a6" font-family="Liberation Sans,sans-serif">1957</text><text transform="translate(317 451) rotate(-90)" font-size="5.3" text-anchor="middle" fill="#999" font-family="Liberation Sans,sans-serif">Steel Temperature</text><text transform="translate(564.5 451) rotate(-90)" font-size="5.3" text-anchor="middle" fill="#f26a6a" font-family="Liberation Sans,sans-serif">Slag Temperature</text></svg>
<div class="a" style="left:577.5px;top:130px;width:87.5px;height:79px;background:#fff;border:1px solid #e2e2e2;border-radius:1.5px"></div>
<div class="a" style="left:578.5px;top:131px;width:85.5px;height:12px;background:#f5f5f5"></div>
<div class="t" style="left:580.7px;top:135.1px;font-size:5.7px;transform:scaleX(0.905);color:#222">Tap Temperature Input</div>
<svg class="a" style="left:0;top:0" width="840" height="630"><g stroke="#333" stroke-width="0.9" fill="none"><path d="M636.7 136.20000000000002l2.3 2.3l2.3 -2.3"/><path d="M657.1 135.20000000000002l4.2 4.2M661.3000000000001 135.20000000000002l-4.2 4.2"/><path d="M648.0 134.70000000000002h1.8v3h-1.8zM647.1999999999999 137.8h3.4M648.9 137.8v2.3" stroke-width="0.55" opacity="0.75" fill="none"/></g></svg>
<div class="a" style="left:580px;top:147.5px;width:83.3px;height:56.8px;background:#f4f4f4;border:1.2px solid #b2daf0;border-radius:2px"></div>
<div class="t" style="left:583.3px;top:166.8px;font-size:7.4px;font-weight:bold;color:#111;transform:scaleX(.968)">Tap Temperature Input</div>
<div class="t" style="left:607.3px;top:178px;font-size:6.9px;color:#222">1600,0°C</div>
<div class="a" style="left:651.3px;top:191.8px;width:9.2px;height:9.2px;background:#e6e6e6;border:0.6px solid #d6d6d6;border-radius:1px"></div>
<svg class="a" style="left:0;top:0" width="840" height="630"><path d="M655.40 193.45 L656.20 193.45 L656.55 194.28 L657.17 194.64 L658.07 194.53 L658.47 195.22 L657.92 195.94 L657.92 196.66 L658.47 197.38 L658.07 198.07 L657.17 197.96 L656.55 198.32 L656.20 199.15 L655.40 199.15 L655.05 198.32 L654.43 197.96 L653.53 198.07 L653.13 197.38 L653.68 196.66 L653.68 195.94 L653.13 195.22 L653.53 194.53 L654.43 194.64 L655.05 194.28Z" fill="#222"/><circle cx="655.80" cy="196.30" r="1.19" fill="#f0f0f0"/></svg>
<div class="a" style="left:668.5px;top:130px;width:84px;height:79px;overflow:hidden">
<div class="a" style="left:0;top:0;width:84px;height:79px;background:#fff;border:1px solid #e2e2e2;border-radius:1.5px"></div><div class="a" style="left:1px;top:1px;width:82px;height:12px;background:#f5f5f5"></div>
<div class="a" style="left:2.5px;top:17.5px;width:90px;height:56.8px;background:#f4f4f4;border:1.2px solid #b2daf0;border-radius:2px"></div></div>
<div class="t" style="left:671.2px;top:135.1px;font-size:5.7px;transform:scaleX(0.892);color:#222">Live Total Steel</div>
<svg class="a" style="left:0;top:0" width="840" height="630"><g stroke="#333" stroke-width="0.9" fill="none"><path d="M724.2 136.4l2.3 2.3l2.3 -2.3"/><path d="M744.6 135.4l4.2 4.2M748.8000000000001 135.4l-4.2 4.2"/><path d="M735.5 134.9h1.8v3h-1.8zM734.6999999999999 138.0h3.4M736.4 138.0v2.3" stroke-width="0.55" opacity="0.75" fill="none"/></g></svg>
<div class="t" style="left:677px;top:161px;font-size:11.7px;font-weight:bold;color:#5a7896;transform:none">Total Steel %</div>
<div class="t" style="left:698.8px;top:178.5px;font-size:11.3px;color:#6f87a0;transform:none">100,0</div>
<div class="a" style="left:742.5px;top:191.8px;width:9.2px;height:9.2px;background:#e6e6e6;border:0.6px solid #d6d6d6;border-radius:1px"></div>
<svg class="a" style="left:0;top:0" width="840" height="630"><path d="M746.60 193.45 L747.40 193.45 L747.75 194.28 L748.37 194.64 L749.27 194.53 L749.67 195.22 L749.12 195.94 L749.12 196.66 L749.67 197.38 L749.27 198.07 L748.37 197.96 L747.75 198.32 L747.40 199.15 L746.60 199.15 L746.25 198.32 L745.63 197.96 L744.73 198.07 L744.33 197.38 L744.88 196.66 L744.88 195.94 L744.33 195.22 L744.73 194.53 L745.63 194.64 L746.25 194.28Z" fill="#222"/><circle cx="747.00" cy="196.30" r="1.19" fill="#f0f0f0"/></svg>
<div class="a" style="left:755.5px;top:130px;width:82px;height:79px;overflow:hidden">
<div class="a" style="left:0;top:0;width:90px;height:79px;background:#fff;border:1px solid #e2e2e2;border-radius:1.5px"></div><div class="a" style="left:1px;top:1px;width:90px;height:12px;background:#f5f5f5"></div>
<div class="a" style="left:2.5px;top:17.5px;width:90px;height:56.8px;background:#f4f4f4;border:1.2px solid #b2daf0;border-radius:2px"></div></div>
<div class="t" style="left:758.7px;top:135.1px;font-size:5.7px;transform:scaleX(0.879);color:#222">Live Total Slag</div>
<svg class="a" style="left:0;top:0" width="840" height="630"><g stroke="#333" stroke-width="0.9" fill="none"><path d="M811.7 136.4l2.3 2.3l2.3 -2.3"/><path d="M832.1 135.4l4.2 4.2M836.3000000000001 135.4l-4.2 4.2"/><path d="M823.0 134.9h1.8v3h-1.8zM822.1999999999999 138.0h3.4M823.9 138.0v2.3" stroke-width="0.55" opacity="0.75" fill="none"/></g></svg>
<div class="t" style="left:764px;top:161px;font-size:11.7px;font-weight:bold;color:#ff1010;transform:scaleX(1.035)">Total Slag %</div>
<div class="t" style="left:791.7px;top:178.5px;font-size:11.5px;color:#ff2020;transform:none">0,0</div>
<div class="a" style="left:830px;top:192.5px;width:7.5px;height:8.5px;overflow:hidden">
</div>
<div class="a" style="left:829.8px;top:191.8px;width:9.2px;height:9.2px;background:#e6e6e6;border:0.6px solid #d6d6d6;border-radius:1px"></div>
<svg class="a" style="left:0;top:0" width="840" height="630"><path d="M833.90 193.45 L834.70 193.45 L835.05 194.28 L835.67 194.64 L836.57 194.53 L836.97 195.22 L836.42 195.94 L836.42 196.66 L836.97 197.38 L836.57 198.07 L835.67 197.96 L835.05 198.32 L834.70 199.15 L833.90 199.15 L833.55 198.32 L832.93 197.96 L832.03 198.07 L831.63 197.38 L832.18 196.66 L832.18 195.94 L831.63 195.22 L832.03 194.53 L832.93 194.64 L833.55 194.28Z" fill="#222"/><circle cx="834.30" cy="196.30" r="1.19" fill="#f0f0f0"/></svg>
<div class="a" style="left:837.5px;top:113px;width:2.5px;height:412px;background:#f0f0f0"></div>
<div class="a" style="left:837.5px;top:113px;width:1px;height:412px;background:#d9e2ea"></div>
<div class="a" style="left:577.5px;top:213px;width:87.5px;height:76.5px;background:#fff;border:1px solid #e2e2e2;border-radius:1.5px"></div>
<div class="a" style="left:578.5px;top:214px;width:85.5px;height:12px;background:#f5f5f5"></div>
<div class="t" style="left:580.7px;top:218.1px;font-size:5.7px;transform:scaleX(0.886);color:#222">Tap Number</div>
<svg class="a" style="left:0;top:0" width="840" height="630"><g stroke="#333" stroke-width="0.9" fill="none"><path d="M636.7 219.20000000000002l2.3 2.3l2.3 -2.3"/><path d="M657.1 218.20000000000002l4.2 4.2M661.3000000000001 218.20000000000002l-4.2 4.2"/><path d="M648.0 217.70000000000002h1.8v3h-1.8zM647.1999999999999 220.8h3.4M648.9 220.8v2.3" stroke-width="0.55" opacity="0.75" fill="none"/></g></svg>
<div class="a" style="left:580px;top:230px;width:83.3px;height:54.5px;background:#f4f4f4;border:1.2px solid #b2daf0;border-radius:2px"></div>
<div class="t" style="left:585px;top:241.5px;font-size:12.7px;font-weight:bold;color:#111;transform:none">Tap Number</div>
<div class="t" style="left:614.5px;top:258.5px;font-size:13px;color:#111">28</div>
<div class="a" style="left:651.3px;top:272px;width:9.2px;height:9.2px;background:#e6e6e6;border:0.6px solid #d6d6d6;border-radius:1px"></div>
<svg class="a" style="left:0;top:0" width="840" height="630"><path d="M655.40 273.65 L656.20 273.65 L656.55 274.48 L657.17 274.84 L658.07 274.73 L658.47 275.42 L657.92 276.14 L657.92 276.86 L658.47 277.58 L658.07 278.27 L657.17 278.16 L656.55 278.52 L656.20 279.35 L655.40 279.35 L655.05 278.52 L654.43 278.16 L653.53 278.27 L653.13 277.58 L653.68 276.86 L653.68 276.14 L653.13 275.42 L653.53 274.73 L654.43 274.84 L655.05 274.48Z" fill="#222"/><circle cx="655.80" cy="276.50" r="1.19" fill="#f0f0f0"/></svg>
<div class="a" style="left:577.5px;top:293px;width:87.5px;height:72.5px;background:#fff;border:1px solid #e2e2e2;border-radius:1.5px"></div>
<div class="a" style="left:578.5px;top:294px;width:85.5px;height:12px;background:#f5f5f5"></div>
<div class="t" style="left:580.7px;top:298.1px;font-size:5.7px;transform:scaleX(0.868);color:#222">Live Tap Progress</div>
<svg class="a" style="left:0;top:0" width="840" height="630"><g stroke="#333" stroke-width="0.9" fill="none"><path d="M636.7 299.2l2.3 2.3l2.3 -2.3"/><path d="M657.1 298.2l4.2 4.2M661.3000000000001 298.2l-4.2 4.2"/><path d="M648.0 297.7h1.8v3h-1.8zM647.1999999999999 300.8h3.4M648.9 300.8v2.3" stroke-width="0.55" opacity="0.75" fill="none"/></g></svg>
<div class="a" style="left:580px;top:326.5px;width:82px;height:17px;background:#adff2f"></div>
<div class="t" style="left:600.5px;top:329.5px;font-size:11px;color:#1a2a00">00:00:00</div>
<div class="a" style="left:668.5px;top:213px;width:84px;height:152.5px;background:#fff;border:1px solid #e2e2e2;border-radius:1.5px"></div>
<div class="a" style="left:669.5px;top:214px;width:82px;height:12px;background:#f5f5f5"></div>
<div class="t" style="left:671.7px;top:218.1px;font-size:5.7px;transform:scaleX(0.863);color:#222">Live Steel</div>
<svg class="a" style="left:0;top:0" width="840" height="630"><g stroke="#333" stroke-width="0.9" fill="none"><path d="M724.2 219.20000000000002l2.3 2.3l2.3 -2.3"/><path d="M744.6 218.20000000000002l4.2 4.2M748.8000000000001 218.20000000000002l-4.2 4.2"/><path d="M735.5 217.70000000000002h1.8v3h-1.8zM734.6999999999999 220.8h3.4M736.4 220.8v2.3" stroke-width="0.55" opacity="0.75" fill="none"/></g></svg>
<div class="a" style="left:755.5px;top:213px;width:82px;height:152.5px;overflow:hidden"><div class="a" style="left:0;top:0;width:90px;height:152.5px;background:#fff;border:1px solid #e2e2e2;border-radius:1.5px"></div><div class="a" style="left:1px;top:1px;width:90px;height:12px;background:#f5f5f5"></div></div>
<div class="t" style="left:758.7px;top:218.1px;font-size:5.7px;transform:scaleX(0.853);color:#222">Live Slag</div>
<svg class="a" style="left:0;top:0" width="840" height="630"><g stroke="#333" stroke-width="0.9" fill="none"><path d="M811.7 219.4l2.3 2.3l2.3 -2.3"/><path d="M832.1 218.4l4.2 4.2M836.3000000000001 218.4l-4.2 4.2"/><path d="M823.0 217.9h1.8v3h-1.8zM822.1999999999999 221.0h3.4M823.9 221.0v2.3" stroke-width="0.55" opacity="0.75" fill="none"/></g></svg>
<div class="a" style="left:837.5px;top:113px;width:2.5px;height:412px;background:#f0f0f0"></div>
<div class="a" style="left:837.5px;top:113px;width:1px;height:412px;background:#d9e2ea"></div>
<svg class="a" style="left:0;top:0" width="840" height="630"><rect x="687.95" y="230.45" width="49.1" height="129.1" fill="#fff" stroke="#484848" stroke-width="1.4"/></svg>
<div class="a" style="left:692.25px;top:233.75px;width:40.5px;height:5px;background:#efefef"></div>
<div class="a" style="left:692.25px;top:351.75px;width:40.5px;height:5px;background:#efefef"></div>
<div class="t tc" style="left:687.25px;top:234.35px;width:50.5px;text-align:center;font-size:3.9px;font-weight:bold;color:#5a7896">Steel %</div>
<div class="t tc" style="left:687.25px;top:352.35px;width:50.5px;text-align:center;font-size:3.9px;font-weight:bold;color:#5a7896">100,0</div>
<svg class="a" style="left:0;top:0" width="840" height="630"><path d="M707.2 244.5h13.7v93.2a7.6 7.6 0 1 1 -13.7 0z" fill="#fff" stroke="#d9c9e4" stroke-width="0.7"/><path d="M707.6 247h12.9v91a7.2 7.2 0 1 1 -12.9 0z" fill="#00ff00"/><path d="M704.3 247.0H707" stroke="#bbb" stroke-width="0.5"/><path d="M705.2 251.6H707" stroke="#bbb" stroke-width="0.5"/><path d="M705.2 256.1H707" stroke="#bbb" stroke-width="0.5"/><path d="M705.2 260.6H707" stroke="#bbb" stroke-width="0.5"/><path d="M705.2 265.2H707" stroke="#bbb" stroke-width="0.5"/><path d="M704.3 269.8H707" stroke="#bbb" stroke-width="0.5"/><path d="M705.2 274.3H707" stroke="#bbb" stroke-width="0.5"/><path d="M705.2 278.9H707" stroke="#bbb" stroke-width="0.5"/><path d="M705.2 283.4H707" stroke="#bbb" stroke-width="0.5"/><path d="M705.2 287.9H707" stroke="#bbb" stroke-width="0.5"/><path d="M704.3 292.5H707" stroke="#bbb" stroke-width="0.5"/><path d="M705.2 297.1H707" stroke="#bbb" stroke-width="0.5"/><path d="M705.2 301.6H707" stroke="#bbb" stroke-width="0.5"/><path d="M705.2 306.1H707" stroke="#bbb" stroke-width="0.5"/><path d="M705.2 310.7H707" stroke="#bbb" stroke-width="0.5"/><path d="M704.3 315.2H707" stroke="#bbb" stroke-width="0.5"/><path d="M705.2 319.8H707" stroke="#bbb" stroke-width="0.5"/><path d="M705.2 324.4H707" stroke="#bbb" stroke-width="0.5"/><path d="M705.2 328.9H707" stroke="#bbb" stroke-width="0.5"/><path d="M705.2 333.4H707" stroke="#bbb" stroke-width="0.5"/><path d="M704.3 338.0H707" stroke="#bbb" stroke-width="0.5"/><path d="M707.5 264.6h13.3" stroke="#0a9a0a" stroke-width="0.7"/><path d="M700 262.6h3.8l-1.9 3.6z" fill="#0000ff"/></svg>
<div class="t" style="left:695.8px;top:244.1px;font-size:4.2px;color:#333">100</div>
<div class="t" style="left:722.3px;top:262.6px;font-size:4.2px;color:#333">80</div>
<div class="t" style="left:697.3px;top:335.8px;font-size:4.2px;color:#333">0</div>
<div class="a" style="left:727px;top:339.7px;width:8.2px;height:8.2px;background:#e6e6e6;border:0.6px solid #d6d6d6;border-radius:1px"></div>
<svg class="a" style="left:0;top:0" width="840" height="630"><path d="M730.65 341.18 L731.35 341.18 L731.66 341.92 L732.21 342.24 L733.01 342.13 L733.36 342.75 L732.87 343.38 L732.87 344.02 L733.36 344.65 L733.01 345.27 L732.21 345.16 L731.66 345.48 L731.35 346.22 L730.65 346.22 L730.34 345.48 L729.79 345.16 L728.99 345.27 L728.64 344.65 L729.13 344.02 L729.13 343.38 L728.64 342.75 L728.99 342.13 L729.79 342.24 L730.34 341.92Z" fill="#222"/><circle cx="731.00" cy="343.70" r="1.05" fill="#f0f0f0"/></svg>
<svg class="a" style="left:0;top:0" width="840" height="630"><rect x="775.45" y="230.45" width="49.1" height="129.1" fill="#fff" stroke="#484848" stroke-width="1.4"/></svg>
<div class="a" style="left:779.75px;top:233.75px;width:40.5px;height:5px;background:#efefef"></div>
<div class="a" style="left:779.75px;top:351.75px;width:40.5px;height:5px;background:#efefef"></div>
<div class="t tc" style="left:774.75px;top:234.35px;width:50.5px;text-align:center;font-size:3.9px;font-weight:bold;color:#ff1010">Slag %</div>
<div class="t tc" style="left:774.75px;top:352.35px;width:50.5px;text-align:center;font-size:3.9px;font-weight:bold;color:#ff1010">0,0</div>
<svg class="a" style="left:0;top:0" width="840" height="630"><path d="M794.2 244.5h13.7v93.2a7.6 7.6 0 1 1 -13.7 0z" fill="#fff" stroke="#cfcfcf" stroke-width="0.9"/><path d="M794.8 337.2h12.5v1a7.2 7.2 0 1 1 -12.5 0z" fill="#00ee00"/><path d="M791.3 247.0H794" stroke="#bbb" stroke-width="0.5"/><path d="M792.2 251.6H794" stroke="#bbb" stroke-width="0.5"/><path d="M792.2 256.1H794" stroke="#bbb" stroke-width="0.5"/><path d="M792.2 260.6H794" stroke="#bbb" stroke-width="0.5"/><path d="M792.2 265.2H794" stroke="#bbb" stroke-width="0.5"/><path d="M791.3 269.8H794" stroke="#bbb" stroke-width="0.5"/><path d="M792.2 274.3H794" stroke="#bbb" stroke-width="0.5"/><path d="M792.2 278.9H794" stroke="#bbb" stroke-width="0.5"/><path d="M792.2 283.4H794" stroke="#bbb" stroke-width="0.5"/><path d="M792.2 287.9H794" stroke="#bbb" stroke-width="0.5"/><path d="M791.3 292.5H794" stroke="#bbb" stroke-width="0.5"/><path d="M792.2 297.1H794" stroke="#bbb" stroke-width="0.5"/><path d="M792.2 301.6H794" stroke="#bbb" stroke-width="0.5"/><path d="M792.2 306.1H794" stroke="#bbb" stroke-width="0.5"/><path d="M792.2 310.7H794" stroke="#bbb" stroke-width="0.5"/><path d="M791.3 315.2H794" stroke="#bbb" stroke-width="0.5"/><path d="M792.2 319.8H794" stroke="#bbb" stroke-width="0.5"/><path d="M792.2 324.4H794" stroke="#bbb" stroke-width="0.5"/><path d="M792.2 328.9H794" stroke="#bbb" stroke-width="0.5"/><path d="M792.2 333.4H794" stroke="#bbb" stroke-width="0.5"/><path d="M791.3 338.0H794" stroke="#bbb" stroke-width="0.5"/><path d="M794.5 319.2h13.3" stroke="#aaa" stroke-width="0.6"/><path d="M787 321.6h3.8l-1.9 -3.6z" fill="#0000ff"/></svg>
<div class="t" style="left:783.3px;top:244.1px;font-size:4.2px;color:#333">100</div>
<div class="t" style="left:809.3px;top:317.4px;font-size:4.2px;color:#333">20</div>
<div class="t" style="left:784.6px;top:335.8px;font-size:4.2px;color:#333">0</div>
<div class="a" style="left:814.5px;top:339.7px;width:8.2px;height:8.2px;background:#e6e6e6;border:0.6px solid #d6d6d6;border-radius:1px"></div>
<svg class="a" style="left:0;top:0" width="840" height="630"><path d="M818.15 341.18 L818.85 341.18 L819.16 341.92 L819.71 342.24 L820.51 342.13 L820.86 342.75 L820.37 343.38 L820.37 344.02 L820.86 344.65 L820.51 345.27 L819.71 345.16 L819.16 345.48 L818.85 346.22 L818.15 346.22 L817.84 345.48 L817.29 345.16 L816.49 345.27 L816.14 344.65 L816.63 344.02 L816.63 343.38 L816.14 342.75 L816.49 342.13 L817.29 342.24 L817.84 341.92Z" fill="#222"/><circle cx="818.50" cy="343.70" r="1.05" fill="#f0f0f0"/></svg>
<div class="a" style="left:577.5px;top:369px;width:260px;height:153.5px;overflow:hidden"><div class="a" style="left:0;top:0;width:270px;height:153px;background:#fff;border:1px solid #e2e2e2;border-radius:1.5px"></div><div class="a" style="left:1px;top:1px;width:270px;height:11.5px;background:#f5f5f5"></div></div>
<div class="t" style="left:580.2px;top:374px;font-size:5.7px;transform:scaleX(0.874);color:#222">Live Trend</div>
<svg class="a" style="left:0;top:0" width="840" height="630"><g stroke="#333" stroke-width="0.9" fill="none"><path d="M811.7 374.29999999999995l2.3 2.3l2.3 -2.3"/><path d="M832.1 373.29999999999995l4.2 4.2M836.3000000000001 373.29999999999995l-4.2 4.2"/><path d="M823.0 372.79999999999995h1.8v3h-1.8zM822.1999999999999 375.9h3.4M823.9 375.9v2.3" stroke-width="0.55" opacity="0.75" fill="none"/></g></svg>
<div class="a" style="left:580px;top:386.7px;width:96px;height:20.5px;background:#d8d8d8;border-radius:2px"></div>
<div class="t tc" style="left:580px;top:387.8px;width:96px;text-align:center;font-size:5.3px;color:#222">Graph Display</div>
<div class="a" style="left:582px;top:395.8px;width:44px;height:9.6px;background:#126bc0"></div>
<div class="t tc" style="left:582px;top:398.2px;width:44px;text-align:center;font-size:5.2px;color:#fff">All Data</div>
<div class="a" style="left:630.3px;top:395.8px;width:43px;height:9.6px;background:#e9e9e9;border:1px solid #cacaca"></div>
<div class="t tc" style="left:630.3px;top:398.2px;width:43px;text-align:center;font-size:5.2px;color:#222">Logged Data</div>
<div class="a" style="left:686.7px;top:389.7px;width:15.5px;height:14.5px;background:#e2e2e2;border:1px solid #d0d0d0"></div>
<svg class="a" style="left:686.7px;top:389.7px" width="16" height="15"><path d="M3 2.3l10.3 5l-10.3 5z" fill="#444"/></svg>
<div class="a" style="left:713.3px;top:389.7px;width:14.6px;height:14.5px;background:#ececec;border:1px solid #d0d0d0"></div>
<svg class="a" style="left:713.3px;top:389.7px" width="15" height="15"><path d="M3.6 2.6h5l2.6 2.6v7h-7.6z" fill="#fff" stroke="#222" stroke-width="0.9"/><path d="M8.4 2.6v2.8h2.8" fill="none" stroke="#222" stroke-width="0.7"/><text x="7.4" y="9.6" font-size="2.6" font-family="Liberation Sans,sans-serif" text-anchor="middle" font-weight="bold" fill="#222">CSV</text></svg>
<svg class="a" style="left:823px;top:385px" width="10" height="8"><path d="M5.8 1.8l-2.2 2.2l2.2 2.2" stroke="#222" stroke-width="1.2" fill="none"/></svg>
<div class="t" style="left:824.5px;top:396px;font-size:4.9px;color:#333;writing-mode:vertical-rl;transform:none">Data</div>
<svg class="a" style="left:0;top:0" width="840" height="630"><rect x="588.3" y="410" width="231.7" height="58.6" fill="#fbfbfb"/><rect x="588.3" y="410.0" width="231.7" height="5.2" fill="#000" opacity="0.055"/><rect x="588.3" y="425.9" width="231.7" height="10.7" fill="#000" opacity="0.055"/><rect x="588.3" y="447.2" width="231.7" height="10.7" fill="#000" opacity="0.055"/><rect x="609.8" y="410" width="38.4" height="58.6" fill="#000" opacity="0.06"/><rect x="686.4" y="410" width="38.2" height="58.6" fill="#000" opacity="0.06"/><rect x="762.6" y="410" width="37.9" height="58.6" fill="#000" opacity="0.06"/><path d="M588.3 468.6H820" stroke="#666" stroke-width="0.5" opacity="0.55"/><path d="M588.3 457.9H820" stroke="#666" stroke-width="0.5" opacity="0.55"/><path d="M588.3 447.2H820" stroke="#666" stroke-width="0.5" opacity="0.55"/><path d="M588.3 436.6H820" stroke="#666" stroke-width="0.5" opacity="0.55"/><path d="M588.3 425.9H820" stroke="#666" stroke-width="0.5" opacity="0.55"/><path d="M588.3 415.2H820" stroke="#666" stroke-width="0.5" opacity="0.55"/><path d="M609.8 410V471.1" stroke="#666" stroke-width="0.5" opacity="0.6"/><path d="M648.2 410V471.1" stroke="#666" stroke-width="0.5" opacity="0.6"/><path d="M686.4 410V471.1" stroke="#666" stroke-width="0.5" opacity="0.6"/><path d="M724.6 410V471.1" stroke="#666" stroke-width="0.5" opacity="0.6"/><path d="M762.6 410V471.1" stroke="#666" stroke-width="0.5" opacity="0.6"/><path d="M800.5 410V471.1" stroke="#666" stroke-width="0.5" opacity="0.6"/><path d="M590.8 415.2 L592.0 416.0 L593.2 415.5 L594.4 415.6 L595.6 416.0 L596.8 415.3 L598.0 416.0 L599.2 415.4 L600.4 416.1 L601.6 415.7 L602.5 415.2 L604.1 419.5 L605.8 435.5 L607.1 447.2 L608.3 452.6 L609.3 453.4 L610.3 452.3 L611.2 454.5 L612.2 456.4 L613.2 455.4 L614.2 458.1 L615.2 458.7 L616.2 457.1 L617.1 456.7 L618.1 458.6 L619.1 461.1 L620.1 460.4 L621.1 462.3 L622.1 463.6 L623.0 462.7 L624.0 463.1 L625.0 463.8 L627.0 461.1 L628.5 455.8 L630.0 452.6 L631.5 448.3 L632.5 450.4 L634.0 443.0 L634.7 452.6 L635.3 468.6 L637.1 468.6 L637.5 415.2 L638.0 439.2 L638.5 452.6 L639.0 468.6 L655.0 468.6 L655.6 415.2 L656.5 415.3 L659.5 415.2 L662.5 415.1 L665.5 415.1 L668.5 415.2 L671.5 415.1 L674.5 415.3 L677.5 415.2 L680.5 415.1 L683.5 415.2 L684.4 415.2 L685.4 416.8 L686.6 416.5 L687.6 415.2 L689.0 415.8 L690.2 415.0 L691.4 415.7 L692.6 415.6 L693.8 415.2 L695.0 415.6 L696.2 415.6 L697.4 415.8 L698.6 415.8 L699.8 415.3 L701.0 415.6 L702.2 415.3 L703.4 415.5 L704.6 415.5 L705.8 415.0 L707.0 415.4 L712.4 415.2 L713.4 418.4 L714.6 417.8 L715.6 415.2 L718.1 415.2 L719.1 419.5 L720.3 418.6 L721.3 415.2 L722.5 415.2 L725.5 415.1 L728.5 415.3 L731.5 415.3 L734.5 415.1 L737.5 415.1 L740.5 415.3 L743.5 415.3 L746.5 415.1 L749.5 415.1 L752.5 415.3 L755.5 415.1 L758.5 415.1 L761.5 415.2 L763.4 415.2 L764.4 417.3 L765.6 416.9 L766.6 415.2 L767.5 415.6 L768.7 415.9 L769.9 415.9 L771.1 415.1 L772.3 415.7 L773.5 415.3 L774.7 415.7 L775.9 415.2 L776.5 415.2 L778.1 419.5 L779.8 435.5 L781.1 447.2 L782.3 452.6 L783.3 453.4 L784.3 452.0 L785.2 453.3 L786.2 455.9 L787.2 456.7 L788.2 455.5 L789.2 455.9 L790.2 456.1 L791.1 460.4 L792.1 457.6 L793.1 458.0 L794.1 462.1 L795.1 460.1 L796.1 463.4 L797.0 460.7 L798.0 464.6 L799.0 465.3 L801.0 461.1 L802.5 455.8 L804.0 452.6 L805.5 448.3 L806.5 450.4 L808.0 443.0 L808.7 452.6 L809.3 468.6 L811.1 468.6 L811.5 415.2 L812.0 439.2 L812.5 452.6 L813.0 468.6 L820.0 468.6" fill="none" stroke="#5f7892" stroke-width="0.8" stroke-linejoin="round"/><path d="M590.8 468.0 L592.0 468.2 L593.2 468.3 L594.4 467.9 L595.6 468.4 L596.8 468.3 L598.0 468.0 L599.2 467.8 L600.4 467.9 L601.6 468.2 L602.5 468.6 L604.1 465.4 L605.8 439.2 L607.1 431.2 L609.0 426.4 L609.6 425.8 L610.6 425.7 L611.5 424.8 L612.5 424.6 L613.5 423.1 L614.5 424.5 L615.5 422.2 L616.5 424.6 L617.4 420.7 L618.4 421.6 L619.4 423.4 L620.4 422.8 L621.4 421.7 L622.4 420.4 L623.3 418.5 L624.3 418.9 L625.3 418.3 L626.5 419.5 L628.2 421.6 L629.7 433.4 L631.0 431.2 L632.0 436.6 L633.3 437.6 L634.3 447.2 L635.3 464.3 L635.8 468.6 L640.0 468.5 L643.0 468.6 L646.0 468.6 L649.0 468.6 L652.0 468.6 L655.0 468.6 L658.0 468.6 L661.0 468.6 L664.0 468.5 L667.0 468.6 L670.0 468.6 L673.0 468.5 L676.0 468.5 L679.0 468.5 L682.0 468.5 L684.4 468.6 L685.4 467.0 L686.6 467.3 L687.6 468.6 L689.0 468.1 L690.2 468.4 L691.4 468.5 L692.6 468.5 L693.8 467.9 L695.0 468.0 L696.2 467.9 L697.4 468.5 L698.6 468.1 L699.8 468.2 L701.0 468.0 L702.2 468.3 L703.4 467.9 L704.6 468.4 L705.8 468.1 L707.0 468.0 L712.4 468.6 L713.4 465.9 L714.6 466.5 L715.6 468.6 L718.1 468.6 L719.1 464.3 L720.3 465.2 L721.3 468.6 L722.5 468.5 L725.5 468.5 L728.5 468.5 L731.5 468.5 L734.5 468.5 L737.5 468.6 L740.5 468.5 L743.5 468.5 L746.5 468.5 L749.5 468.6 L752.5 468.5 L755.5 468.5 L758.5 468.5 L761.5 468.5 L763.4 468.6 L764.4 467.0 L765.6 467.3 L766.6 468.6 L767.5 468.2 L768.7 468.1 L769.9 468.0 L771.1 468.4 L772.3 468.0 L773.5 467.8 L774.7 467.9 L775.9 468.0 L776.5 468.6 L778.1 465.4 L779.8 439.2 L781.1 431.2 L783.0 426.4 L783.6 426.8 L784.6 423.7 L785.5 424.3 L786.5 425.7 L787.5 425.8 L788.5 424.1 L789.5 423.8 L790.5 421.6 L791.4 423.5 L792.4 422.1 L793.4 422.0 L794.4 420.7 L795.4 421.6 L796.4 420.9 L797.3 418.9 L798.3 420.3 L799.3 420.6 L800.5 419.5 L802.2 421.6 L803.7 433.4 L805.0 431.2 L806.0 436.6 L807.3 437.6 L808.3 447.2 L809.3 464.3 L809.8 468.6 L812.0 468.6 L820.0 468.6" fill="none" stroke="#ff1010" stroke-width="1" stroke-linejoin="round"/><text x="584.8" y="427.7" font-size="4.8" text-anchor="end" fill="#444" font-family="Liberation Sans,sans-serif">80</text><text x="584.8" y="449.3" font-size="4.8" text-anchor="end" fill="#444" font-family="Liberation Sans,sans-serif">40</text><text x="584.8" y="467.7" font-size="4.8" text-anchor="end" fill="#444" font-family="Liberation Sans,sans-serif">0</text><text x="610.3" y="479.3" font-size="4.9" text-anchor="middle" fill="#555" font-family="Liberation Sans,sans-serif">16:20:50:0</text><text x="648.7" y="479.3" font-size="4.9" text-anchor="middle" fill="#555" font-family="Liberation Sans,sans-serif">16:21:00:0</text><text x="686.9" y="479.3" font-size="4.9" text-anchor="middle" fill="#555" font-family="Liberation Sans,sans-serif">16:21:10:0</text><text x="725.1" y="479.3" font-size="4.9" text-anchor="middle" fill="#555" font-family="Liberation Sans,sans-serif">16:21:20:0</text><text x="763.1" y="479.3" font-size="4.9" text-anchor="middle" fill="#555" font-family="Liberation Sans,sans-serif">16:21:30:0</text><text x="801.0" y="479.3" font-size="4.9" text-anchor="middle" fill="#555" font-family="Liberation Sans,sans-serif">16:21:40:0</text><path d="M591.6 493.6 L593.1 490.0 L594.6 485.5 L596.6 483.6 L597.6 482.4 L599.1 482.8 L600.6 482.6 L602.1 482.4 L603.6 482.9 L605.1 482.0 L606.6 482.8 L608.1 481.9 L609.6 482.6 L611.1 482.5 L612.6 482.2 L614.1 482.7 L615.6 482.5 L617.1 482.6 L618.6 483.0 L620.1 482.2 L621.8 483.5 L623.8 486.0 L624.8 490.0 L625.8 493.6Z" fill="#8fc0e6"/><path d="M780.5 493.6 L782.0 490.0 L783.5 485.5 L785.5 483.6 L786.5 481.9 L788.0 482.3 L789.5 482.7 L791.0 482.1 L792.5 482.1 L794.0 483.0 L795.5 482.7 L797.0 482.4 L798.5 483.0 L800.0 482.3 L801.5 482.7 L803.0 482.1 L804.5 482.4 L806.5 483.5 L808.5 486.0 L809.5 490.0 L810.5 493.6Z" fill="#8fc0e6"/><path d="M705 493.6l3 -0.9h4l2 0.9zM760 493.6l3 -0.6h6l2 0.6z" fill="#8fc0e6"/><path d="M577 493.7H822" stroke="#9a9a9a" stroke-width="0.9"/><rect x="576.6" y="483" width="2.4" height="8.8" rx="1" fill="#555"/><rect x="819.2" y="483" width="2.4" height="8.8" rx="1" fill="#555"/></svg>
<svg class="a" style="left:578px;top:505px" width="12" height="10"><path d="M2.4 6l2.3 -2.3l2.3 2.3" stroke="#222" stroke-width="1" fill="none"/></svg>
<div class="t" style="left:589.5px;top:507.3px;font-size:5.4px;color:#222">Analysis</div>
<div class="a" style="left:809px;top:502.5px;width:9.1px;height:9.1px;background:#e6e6e6;border:0.6px solid #d6d6d6;border-radius:1px"></div>
<svg class="a" style="left:0;top:0" width="840" height="630"><path d="M813.05 504.13 L813.85 504.13 L814.19 504.96 L814.80 505.31 L815.69 505.20 L816.09 505.88 L815.55 506.60 L815.55 507.30 L816.09 508.02 L815.69 508.70 L814.80 508.59 L814.19 508.94 L813.85 509.77 L813.05 509.77 L812.71 508.94 L812.10 508.59 L811.21 508.70 L810.81 508.02 L811.35 507.30 L811.35 506.60 L810.81 505.88 L811.21 505.20 L812.10 505.31 L812.71 504.96Z" fill="#222"/><circle cx="813.45" cy="506.95" r="1.18" fill="#f0f0f0"/></svg>
<div class="a" style="left:3px;top:381.5px;width:149.5px;height:145.5px;background:#fff;border:1px solid #e2e2e2;border-radius:1.5px"></div>
<div class="a" style="left:4px;top:382.5px;width:147.5px;height:12px;background:#f5f5f5"></div>
<div class="t" style="left:6.2px;top:386.6px;font-size:5.7px;transform:scaleX(0.871);color:#222">Gauge</div>
<svg class="a" style="left:0;top:0" width="840" height="630"><g stroke="#333" stroke-width="0.9" fill="none"><path d="M124.2 387.7l2.3 2.3l2.3 -2.3"/><path d="M144.6 386.7l4.2 4.2M148.79999999999998 386.7l-4.2 4.2"/><path d="M135.5 386.2h1.8v3h-1.8zM134.70000000000002 389.3h3.4M136.4 389.3v2.3" stroke-width="0.55" opacity="0.75" fill="none"/></g></svg>
<svg class="a" style="left:0;top:0" width="840" height="630"><rect x="55" y="399.5" width="45.9" height="122.2" fill="#fff" stroke="#484848" stroke-width="1.4"/></svg>
<div class="a" style="left:59px;top:402.6px;width:37.6px;height:4.8px;background:#f0f0f0"></div>
<div class="a" style="left:59px;top:514.3px;width:37.6px;height:4.8px;background:#f0f0f0"></div>
<div class="t tc" style="left:54.3px;top:514.6px;width:47.3px;text-align:center;font-size:4.2px;font-weight:bold;font-family:'Liberation Serif',serif;color:#222">1371,30</div>
<svg class="a" style="left:0;top:0" width="840" height="630"><path d="M73 412h12.2v86.5a6.8 6.8 0 1 1 -12.2 0z" fill="#fff" stroke="#cfe3ea" stroke-width="0.8"/><path d="M73.5 422.5h11.2v76a6.3 6.3 0 1 1 -11.2 0z" fill="#ff0000"/><path d="M73.2 414.4h11.8" stroke="#222" stroke-width="0.8"/><path d="M73.5 422.3h11.2" stroke="#2020c0" stroke-width="0.6"/><path d="M73.5 454.6h11.2" stroke="#a00000" stroke-width="0.6"/><path d="M70.2 414.4H72.8" stroke="#bbb" stroke-width="0.5"/><path d="M71 420.2H72.8" stroke="#bbb" stroke-width="0.5"/><path d="M71 425.9H72.8" stroke="#bbb" stroke-width="0.5"/><path d="M71 431.7H72.8" stroke="#bbb" stroke-width="0.5"/><path d="M71 437.5H72.8" stroke="#bbb" stroke-width="0.5"/><path d="M70.2 443.3H72.8" stroke="#bbb" stroke-width="0.5"/><path d="M71 449.0H72.8" stroke="#bbb" stroke-width="0.5"/><path d="M71 454.8H72.8" stroke="#bbb" stroke-width="0.5"/><path d="M71 460.6H72.8" stroke="#bbb" stroke-width="0.5"/><path d="M71 466.4H72.8" stroke="#bbb" stroke-width="0.5"/><path d="M70.2 472.1H72.8" stroke="#bbb" stroke-width="0.5"/><path d="M71 477.9H72.8" stroke="#bbb" stroke-width="0.5"/><path d="M71 483.7H72.8" stroke="#bbb" stroke-width="0.5"/><path d="M71 489.5H72.8" stroke="#bbb" stroke-width="0.5"/><path d="M71 495.2H72.8" stroke="#bbb" stroke-width="0.5"/><path d="M70.2 501.0H72.8" stroke="#bbb" stroke-width="0.5"/><path d="M65.8 416.8h3.6l-1.8 -3.8z" fill="#e00000"/><path d="M65.8 452.8h3.6l-1.8 3.6z" fill="#ff0000"/></svg>
<div class="t" style="left:59.6px;top:412.6px;font-size:4px;color:#444">150</div>
<div class="t" style="left:86.8px;top:412.6px;font-size:4px;color:#111;font-weight:bold">1400</div>
<div class="t" style="left:86.8px;top:452.8px;font-size:4px;color:#444">800</div>
<div class="t" style="left:63.2px;top:499px;font-size:4px;color:#444">0</div>
<div class="a" style="left:91.8px;top:503.2px;width:7.8px;height:7.8px;background:#e6e6e6;border:0.6px solid #d6d6d6;border-radius:1px"></div>
<svg class="a" style="left:0;top:0" width="840" height="630"><path d="M95.26 504.61 L95.94 504.61 L96.23 505.31 L96.75 505.61 L97.50 505.51 L97.84 506.10 L97.37 506.70 L97.37 507.30 L97.84 507.90 L97.50 508.49 L96.75 508.39 L96.23 508.69 L95.94 509.39 L95.26 509.39 L94.97 508.69 L94.45 508.39 L93.70 508.49 L93.36 507.90 L93.83 507.30 L93.83 506.70 L93.36 506.10 L93.70 505.51 L94.45 505.61 L94.97 505.31Z" fill="#222"/><circle cx="95.60" cy="507.00" r="1.00" fill="#f0f0f0"/></svg>
<div class="a" style="left:156px;top:381.5px;width:145px;height:145.5px;background:#fff;border:1px solid #e2e2e2;border-radius:1.5px"></div>
<div class="a" style="left:157px;top:382.5px;width:143px;height:12px;background:#f5f5f5"></div>
<div class="t" style="left:159.2px;top:386.6px;font-size:5.7px;transform:scaleX(0.931);color:#222">I/O Modules</div>
<svg class="a" style="left:0;top:0" width="840" height="630"><g stroke="#333" stroke-width="0.9" fill="none"><path d="M272.7 387.7l2.3 2.3l2.3 -2.3"/><path d="M293.09999999999997 386.7l4.2 4.2M297.3 386.7l-4.2 4.2"/><path d="M284.0 386.2h1.8v3h-1.8zM283.2 389.3h3.4M284.9 389.3v2.3" stroke-width="0.55" opacity="0.75" fill="none"/></g></svg>
<div class="a" style="left:218.8px;top:402.6px;width:2.8px;height:2.8px;border:0.35px solid #bbb;background:#fff"></div>
<div class="t" style="left:222.5px;top:403.2px;font-size:2.3px;color:#555">Simulate Inputs</div>
<div class="a" style="left:218.2px;top:407.8px;width:26.6px;height:111.2px;background:#f1f1f1;border:0.6px solid #dedede;border-radius:1.5px"></div>
<div class="t tc" style="left:218.2px;top:411.6px;width:26.6px;text-align:center;font-size:2.6px;font-weight:bold;color:#444">MOXA</div>
<div class="a" style="left:221px;top:415.2px;width:21px;height:0.5px;background:#888"></div>
<svg class="a" style="left:0;top:0" width="840" height="630"><circle cx="223" cy="419.6" r="1.5" fill="#5fd35f"/><circle cx="223" cy="426.4" r="1.5" fill="#fff" stroke="#999" stroke-width="0.4"/><circle cx="223" cy="468.5" r="1.5" fill="#fff" stroke="#999" stroke-width="0.4"/><circle cx="223" cy="433.1" r="1.5" fill="#fff" stroke="#999" stroke-width="0.4"/><circle cx="223" cy="475.2" r="1.5" fill="#fff" stroke="#999" stroke-width="0.4"/><circle cx="223" cy="439.8" r="1.5" fill="#fff" stroke="#999" stroke-width="0.4"/><circle cx="223" cy="481.9" r="1.5" fill="#fff" stroke="#999" stroke-width="0.4"/><circle cx="223" cy="446.6" r="1.5" fill="#fff" stroke="#999" stroke-width="0.4"/><circle cx="223" cy="488.7" r="1.5" fill="#fff" stroke="#999" stroke-width="0.4"/><circle cx="223" cy="453.3" r="1.5" fill="#fff" stroke="#999" stroke-width="0.4"/><circle cx="223" cy="495.4" r="1.5" fill="#fff" stroke="#999" stroke-width="0.4"/><circle cx="223" cy="460.0" r="1.5" fill="#fff" stroke="#999" stroke-width="0.4"/><circle cx="223" cy="502.1" r="1.5" fill="#fff" stroke="#999" stroke-width="0.4"/><rect x="227" y="422.6" width="2" height="40.4" fill="#8a63e0"/><rect x="227" y="465.5" width="2" height="40" fill="#ff0000"/></svg>
<div class="t" style="left:227.5px;top:418.5px;font-size:2.3px;color:#555">Comms</div>
<div class="t" style="left:231px;top:425.3px;font-size:2.3px;color:#666">DI0</div>
<div class="t" style="left:231px;top:467.4px;font-size:2.3px;color:#666">DO0</div>
<div class="t" style="left:231px;top:432.02000000000004px;font-size:2.3px;color:#666">DI1</div>
<div class="t" style="left:231px;top:474.12px;font-size:2.3px;color:#666">DO1</div>
<div class="t" style="left:231px;top:438.74px;font-size:2.3px;color:#666">DI2</div>
<div class="t" style="left:231px;top:480.84px;font-size:2.3px;color:#666">DO2</div>
<div class="t" style="left:231px;top:445.46000000000004px;font-size:2.3px;color:#666">DI3</div>
<div class="t" style="left:231px;top:487.56px;font-size:2.3px;color:#666">DO3</div>
<div class="t" style="left:231px;top:452.18px;font-size:2.3px;color:#666">DI4</div>
<div class="t" style="left:231px;top:494.28px;font-size:2.3px;color:#666">DO4</div>
<div class="t" style="left:231px;top:458.90000000000003px;font-size:2.3px;color:#666">DI5</div>
<div class="t" style="left:231px;top:501.0px;font-size:2.3px;color:#666">DO5</div>
<div class="a" style="left:221px;top:511.3px;width:21px;height:0.4px;background:#ddd"></div>
<div class="t tc" style="left:218.2px;top:513.6px;width:26.6px;text-align:center;font-size:2.5px;font-weight:bold;color:#333">127.0.0.11</div>
<div class="a" style="left:0px;top:530px;width:840px;height:13.5px;background:#fdfdfd"></div>
<div class="a" style="left:0px;top:88px;width:1.2px;height:455px;background:#5a5a5a"></div>
<div class="a" style="left:3.2px;top:533.5px;width:1px;height:1px;background:#666"></div>
<div class="a" style="left:3.2px;top:535.9px;width:1px;height:1px;background:#666"></div>
<div class="a" style="left:3.2px;top:538.3px;width:1px;height:1px;background:#666"></div>
<div class="a" style="left:9.5px;top:530.8px;width:50px;height:11.6px;background:#f6f6f6;border:1px solid #d8d8d8;border-radius:1.5px"></div>
<svg class="a" style="left:0;top:0" width="840" height="630"><rect x="12.1" y="534.6" width="6.8" height="3.4" fill="#e8e8e8" stroke="#2a2a2a" stroke-width="0.8"/><rect x="14.3" y="535.6" width="2.4" height="1.4" fill="#2a2a2a"/><rect x="22.3" y="534.6" width="6.8" height="3.4" fill="#e8e8e8" stroke="#2a2a2a" stroke-width="0.8"/><rect x="24.5" y="535.6" width="2.4" height="1.4" fill="#2a2a2a"/><rect x="32.6" y="534.6" width="6.8" height="3.4" fill="#e8e8e8" stroke="#2a2a2a" stroke-width="0.8"/><rect x="34.8" y="535.6" width="2.4" height="1.4" fill="#2a2a2a"/><rect x="43.2" y="534.6" width="6.8" height="3.4" fill="#22dd22" stroke="#0a6a0a" stroke-width="0.8"/><rect x="45.4" y="535.6" width="2.4" height="1.4" fill="#0a6a0a"/><path d="M55.6 535.2l1.5 2l1.5 -2" stroke="#aaa" stroke-width="0.6" fill="none"/><path d="M52.5 531.5v10" stroke="#ddd" stroke-width="0.5"/><rect x="69" y="533.4" width="6" height="4.2" rx="0.8" fill="none" stroke="#222" stroke-width="0.8"/><path d="M69.4 539.3h1.8M72.8 539.3h1.8M70.3 537.6v1.6M73.7 537.6v1.6" stroke="#222" stroke-width="0.7"/><rect x="83" y="533" width="6" height="6.4" fill="#222"/><circle cx="86" cy="536.2" r="1.5" fill="#fff"/><circle cx="86" cy="536.2" r="0.8" fill="#222"/><path d="M83 535h-0.5M83 537.5h-0.5M89 535h0.5M89 537.5h0.5" stroke="#222" stroke-width="0.6"/><path d="M64.5 531v11" stroke="#ddd" stroke-width="0.7"/><path d="M79.5 531v11" stroke="#ddd" stroke-width="0.7"/><path d="M92.8 531v11" stroke="#ddd" stroke-width="0.7"/><path d="M194 531v11" stroke="#ddd" stroke-width="0.7"/></svg>
<div class="t" style="left:97px;top:533.6px;font-size:5.6px;color:#222">Event History</div>
<div class="a" style="left:132px;top:530.5px;width:11.2px;height:12px;background:#22dd22"></div>
<div class="t" style="left:132.7px;top:533.8px;font-size:5.2px;color:#0a3a0a">OPC</div>
<div class="a" style="left:147.5px;top:533.5px;width:43px;height:6.8px;background:#dcdcdc"></div>
<div class="a" style="left:147.5px;top:533.5px;width:37.2px;height:6.8px;background:#3878b4"></div>
<div class="a" style="left:821.3px;top:530.5px;width:18px;height:12.5px;background:#fff;border:1px solid #e2e2e2"></div>
<svg class="a" style="left:0;top:0" width="840" height="630"><path d="M825.5 538.6v-3.6M824.1 536.2l1.4 -1.6l1.4 1.6z" stroke="#22cc22" stroke-width="0.8" fill="#22cc22"/><path d="M834.8 534.6v3.6M833.4 537.4l1.4 1.6l1.4 -1.6z" stroke="#111" stroke-width="0.8" fill="#111"/></svg>
<div class="a" style="left:0px;top:528.4px;width:840px;height:1.9px;background:#dfdfdf"></div>
</body></html>
